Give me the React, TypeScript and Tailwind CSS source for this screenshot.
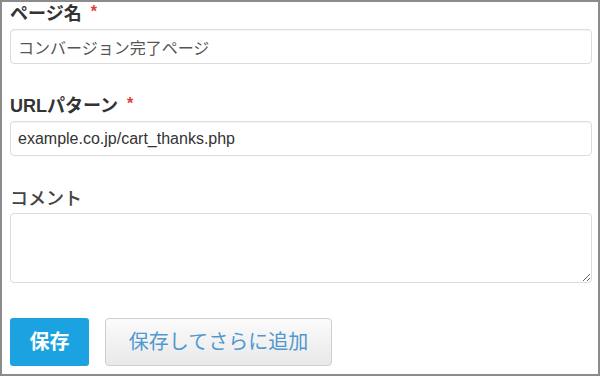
import React from "react";

const font = { fontFamily: '"Liberation Sans", "Noto Sans CJK JP", sans-serif' };

function Label({ text, required, bold = true }: { text: string; required?: boolean; bold?: boolean }) {
  return (
    <div className={`h-[24px] leading-[24px] text-[18px] ${bold ? "font-bold text-[#333]" : "font-medium text-[#444]"} flex items-center`}>
      <span>{text}</span>
      {required && <span className="ml-[9px] text-[#e0403a] text-[16px] font-bold leading-none -mt-[4px]">*</span>}
    </div>
  );
}

export default function App() {
  return (
    <div style={font} className="w-[600px] h-[376px] box-border border-2 border-[#8c8c8c] bg-white pl-2 pr-[6px] flex flex-col">
      <Label text="ページ名" required />
      <input
        readOnly
        value="コンバージョン完了ページ"
        className="mt-[3px] h-[35px] w-full rounded-[4px] border border-[#dcdcdc] px-[7px] text-[16px] text-[#555] outline-none shadow-[inset_0_1px_1px_rgba(0,0,0,0.04)]"
        style={font}
      />
      <div className="mt-[30px]">
        <Label text="URLパターン" required />
      </div>
      <input
        readOnly
        value="example.co.jp/cart_thanks.php"
        className="mt-[3px] h-[35px] w-full rounded-[4px] border border-[#dcdcdc] px-[7px] text-[16px] text-[#333] outline-none shadow-[inset_0_1px_1px_rgba(0,0,0,0.04)]"
        style={font}
      />
      <div className="mt-[31px]">
        <Label text="コメント" bold={false} />
      </div>
      <textarea
        readOnly
        className="mt-[2px] h-[70px] w-full rounded-[4px] border border-[#dcdcdc] px-[7px] text-[16px] text-[#555] outline-none"
        style={font}
      />
      <div className="mt-[35px] flex gap-[16px]">
        <button className="h-[48px] w-[79px] rounded-[3px] bg-[#1ba3e1] text-white text-[20px] font-bold">
          保存
        </button>
        <button className="h-[48px] w-[227px] rounded-[4px] border border-[#cfcfcf] bg-gradient-to-b from-[#fbfbfb] to-[#e9e9e9] text-[20px] text-[#4f98d2]">
          保存してさらに追加
        </button>
      </div>
    </div>
  );
}
